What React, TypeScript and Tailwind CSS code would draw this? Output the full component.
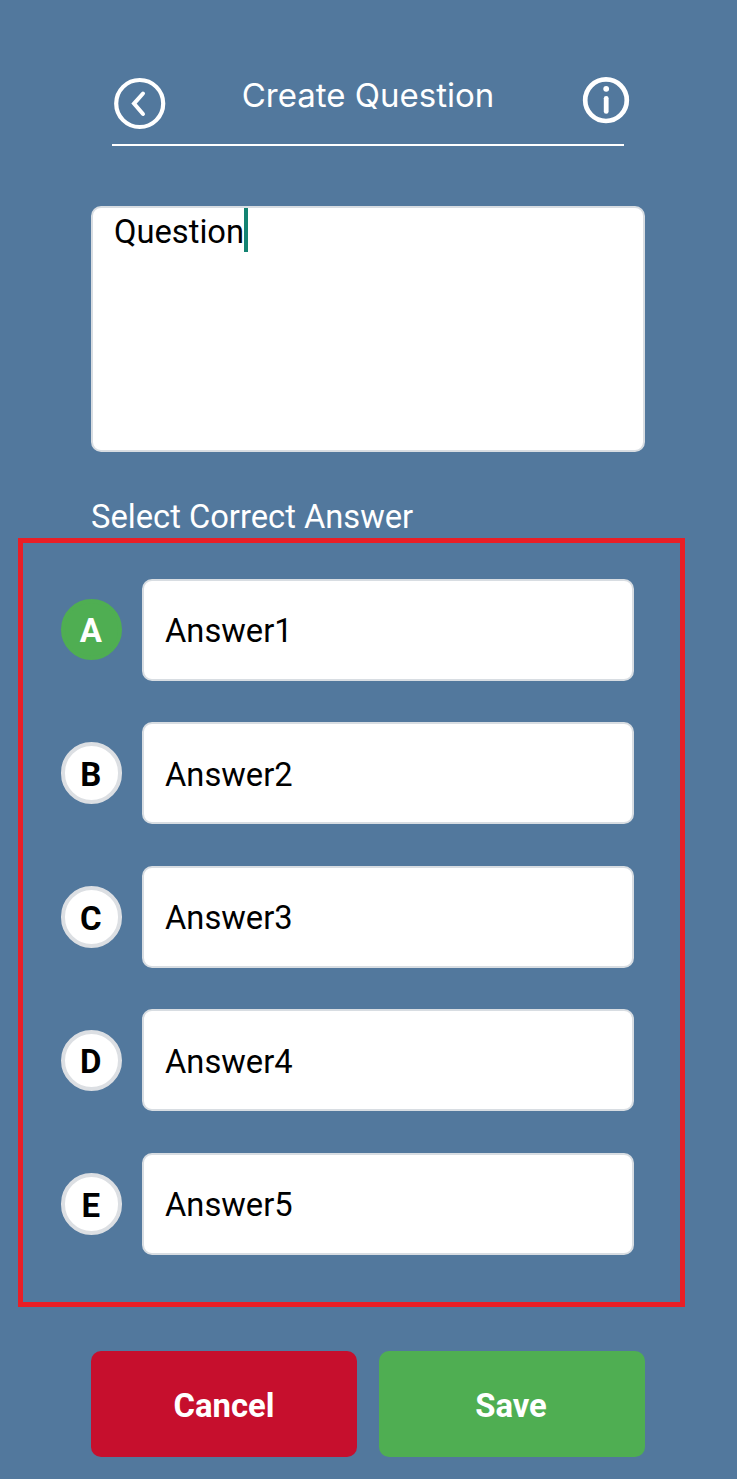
const answers = ['A', 'B', 'C', 'D', 'E'];

function BackIcon() {
  return (
    <svg className="size-[56px] shrink-0" viewBox="0 0 56 56" fill="none" stroke="white">
      <circle cx="27.7" cy="27.5" r="23.5" strokeWidth="4.2" />
      <path d="M31 17.5L22 27.6L31 38" strokeWidth="4" strokeLinecap="round" />
    </svg>
  );
}

function InfoIcon() {
  return (
    <svg className="size-[48px] shrink-0" viewBox="0 0 48 48" fill="none" stroke="white">
      <circle cx="24" cy="24.2" r="20.8" strokeWidth="4.7" />
      <path d="M24.2 22.3V35.4" strokeWidth="4.8" strokeLinecap="round" />
      <circle cx="24.2" cy="12.8" r="2.9" fill="white" stroke="none" />
    </svg>
  );
}

export default function App() {
  return (
    <main className="flex h-[1479px] w-[737px] flex-col overflow-hidden bg-[#52789d] font-['Roboto',sans-serif] text-black">
      <header className="ml-28 mt-[76px] h-[70px] w-[512px] border-b-2 border-white">
        <div className="flex w-[518px] items-start">
          <button className="flex" aria-label="Back"><BackIcon /></button>
          <h1 className="-mt-px w-[400px] text-center font-['Inter',sans-serif] text-[33px] leading-10 text-white">Create Question</h1>
          <button className="ml-[14px] flex" aria-label="Information"><InfoIcon /></button>
        </div>
      </header>
      <section className="ml-[91px] mt-[60px] flex h-[246px] w-[554px] rounded-[10px] border-2 border-[#d8dde2] bg-white pl-[21px]">
        <span className="pt-1 text-[32.7px] leading-10">Question</span>
        <span className="h-[44px] w-1 bg-[#138372]" />
      </section>
      <h2 className="ml-[91px] mt-[44px] h-[42px] text-[32.7px] leading-[42px] text-white">Select Correct Answer</h2>
      <section className="ml-[18px] flex h-[769px] w-[667px] flex-col gap-[41.6px] border-[5px] border-[#e91e26] pl-[37.5px] pt-[35.6px]">
        {answers.map((letter, i) => (
          <div key={letter} className="flex h-[102px] items-center gap-[20px]">
            <button className={`flex size-[61.5px] items-center justify-center rounded-full border-4 pr-px pt-[3px] text-[33px] font-bold ${i === 0 ? 'border-[#4fae52] bg-[#4fae52] text-white' : 'border-[#dcdfe3] bg-white text-black'}`}>{letter}</button>
            <div className="flex h-[102px] w-[492px] items-center rounded-[10px] border-2 border-[#d8dde2] bg-white pl-[21px] pt-1 text-[32.7px]">Answer{i + 1}</div>
          </div>
        ))}
      </section>
      <footer className="ml-[91px] mt-[44px] flex gap-[22px] text-[32.8px] font-bold text-white">
        <button className="h-[106px] w-[266px] rounded-[10px] bg-[#c60f2d] pt-[5px]">Cancel</button>
        <button className="h-[106px] w-[266px] rounded-[10px] bg-[#4fae52] pr-0.5 pt-[5px]">Save</button>
      </footer>
    </main>
  );
}
